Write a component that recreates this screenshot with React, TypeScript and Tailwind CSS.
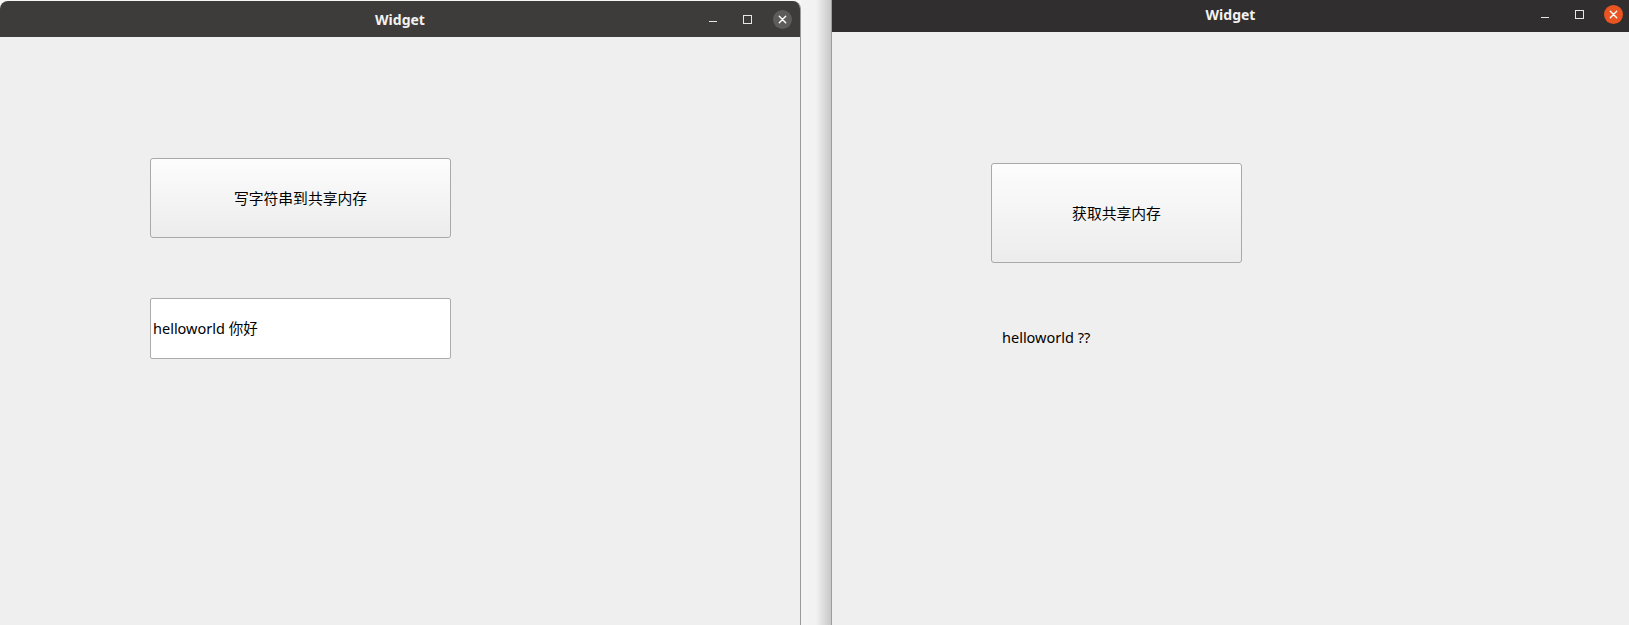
import React from "react";

const font = { fontFamily: "'Noto Sans', 'Noto Sans CJK SC', sans-serif" };

function Controls({ close, gapA, gapB }: { close: string; gapA: string; gapB: string }) {
  return (
    <div className="flex items-center">
      <svg width="8" height="8" viewBox="0 0 8 8">
        <line x1="0" y1="6.5" x2="8" y2="6.5" stroke="#e6e6e6" strokeWidth="1" />
      </svg>
      <div className={gapA} />
      <svg width="9" height="9" viewBox="0 0 9 9">
        <rect x="0.5" y="0.5" width="8" height="8" fill="none" stroke="#e6e6e6" strokeWidth="1" />
      </svg>
      <div className={gapB} />
      <svg width="19" height="19" viewBox="0 0 19 19">
        <circle cx="9.5" cy="9.5" r="9.5" fill={close} />
        <path d="M6.3 6.3 L12.7 12.7 M12.7 6.3 L6.3 12.7" stroke="#ffffff" strokeWidth="1.4" strokeLinecap="round" />
      </svg>
    </div>
  );
}

function TitleBar({ h, bg, close, pr, gapA, gapB }: { h: string; bg: string; close: string; pr: string; gapA: string; gapB: string }) {
  return (
    <div className={`grid grid-cols-[1fr_auto_1fr] items-center ${h} ${bg}`}>
      <div />
      <div className="text-[14px] font-bold text-[#f2f2f2]" style={font}>
        Widget
      </div>
      <div className={`flex justify-end ${pr}`}>
        <Controls close={close} gapA={gapA} gapB={gapB} />
      </div>
    </div>
  );
}

export default function App() {
  return (
    <div className="flex w-[1629px] h-[625px] bg-[#f6f6f6] overflow-hidden text-black" style={font}>
      {/* left window */}
      <div className="w-[801px] pt-[1px] flex flex-col shrink-0">
        <div className="flex-1 flex flex-col rounded-t-[8px] overflow-hidden border-r border-[#9a9a9a]">
          <TitleBar h="h-[36px]" bg="bg-[#3d3c3a]" close="#5d5c5a" pr="pr-[8px]" gapA="w-[26px]" gapB="w-[21px]" />
          <div className="flex-1 bg-[#efefef] pl-[150px] pt-[121px] flex flex-col gap-[60px]">
            <button className="w-[301px] h-[80px] rounded-[3px] border border-[#a9a9a9] bg-gradient-to-b from-[#fdfdfd] to-[#ececec] text-[14.8px]">
              写字符串到共享内存
            </button>
            <div className="w-[301px] h-[61px] rounded-[2px] border border-[#acacac] bg-white flex items-center pl-[2px] text-[14.5px]">
              helloworld 你好
            </div>
          </div>
        </div>
      </div>

      {/* shadow gap */}
      <div className="w-[30px] shrink-0 bg-gradient-to-r from-[#f3f3f3] via-[#f2f2f2] to-[#c8c8c8]" />

      {/* right window */}
      <div className="flex-1 flex flex-col border-l border-[#9e9e9e]">
        <TitleBar h="h-[32px] pb-[3px]" bg="bg-[#302e2e]" close="#e95420" pr="pr-[6px]" gapA="w-[26px]" gapB="w-[20px]" />
        <div className="flex-1 bg-[#efefef] pl-[159px] pt-[131px] flex flex-col">
          <button className="w-[251px] h-[100px] rounded-[3px] border border-[#a9a9a9] bg-gradient-to-b from-[#fdfdfd] to-[#ececec] text-[14.8px]">
            获取共享内存
          </button>
          <div className="mt-[64px] pl-[11px] text-[14.5px] leading-[20px]">helloworld ??</div>
        </div>
      </div>
    </div>
  );
}
